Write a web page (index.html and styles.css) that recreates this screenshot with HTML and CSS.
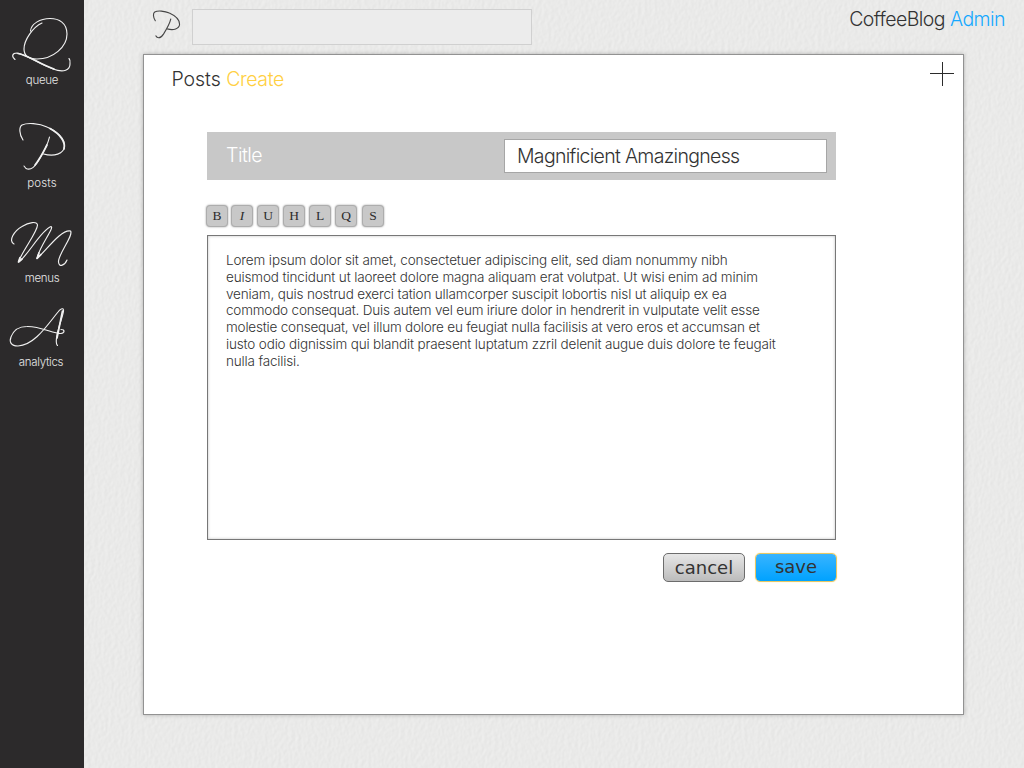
FILE: index.html
```html
<!DOCTYPE html>
<html lang="en">
<head>
<meta charset="utf-8">
<title>CoffeeBlog Admin</title>
<link rel="stylesheet" href="styles.css">
</head>
<body>
<svg class="paper" width="1024" height="768" aria-hidden="true">
  <filter id="grain" x="0" y="0" width="100%" height="100%" color-interpolation-filters="sRGB">
    <feTurbulence type="fractalNoise" baseFrequency="0.3 0.22" numOctaves="2" seed="4" result="n"/>
    <feDiffuseLighting in="n" surfaceScale="0.1" diffuseConstant="1.07" lighting-color="#f1f1f0">
      <feDistantLight azimuth="200" elevation="65"/>
    </feDiffuseLighting>
  </filter>
  <rect width="1024" height="768" filter="url(#grain)"/>
</svg>
<div class="app">
  <nav class="sidebar">
    <a class="nav-item queue">
      <svg class="script" viewBox="0 10 84 64" width="84" height="64">
        <path d="M42 23C33 27 24 40 24 49C24 57 30 59 37 59C53 59 67 47 67 34C67 23 59 18.500 50 18.500C40 18.500 31 24 30.500 31"/>
        <path d="M15 59.500C11 56 12.500 53 17 53C26 54 39 64 53 69C64 73 70 70 70 64C70.500 61 69.500 59 69 58.500"/>
        <path class="swell" d="M18 53.500C28 55 39 64 54 69"/>
      </svg>
      <span>queue</span>
    </a>
    <a class="nav-item posts">
      <svg class="script" viewBox="0 117 84 60" width="84" height="60">
        <path d="M23 140C19 134 19 127 22 125C27 122.500 39 123 47 127C58 132 64.500 139 64.500 146C64 154 54 157 43.500 154"/>
        <path d="M49.500 137C48 144 42 155 37 163C33 169 29 170 26 168.500L24 166"/>
        <path class="swell" d="M50 128.500C60 134 66 142 64 149M47 145C43 153 40 159 35 165"/>
      </svg>
      <span>posts</span>
    </a>
    <a class="nav-item menus">
      <svg class="script" viewBox="0 216 84 56" width="84" height="56">
        <path d="M14 244C8 241 14 231 22 226.500C29 222 37 221 37.500 225C37.500 232 22 251 18.500 262C27 257 41 230 51 226.500C55 227 39 247 37 258.500C46 251 61 229 70.500 231C74 235 58 254 58.500 262C59 268 65 265 67 260"/>
        <path class="swell" d="M20 257.500L18.500 262L22 259M39 253L37 258.500L41 254.500"/>
      </svg>
      <span>menus</span>
    </a>
    <a class="nav-item analytics">
      <svg class="script" viewBox="0 300 84 56" width="84" height="56">
        <path d="M57.500 345.500C55 343 57 333 58.500 329C60 322 64 313 63.500 310C63 307.500 60 309 58 312C48 324 35 345 18 346C11 346 9 342 11 337C14 329 19 326.500 27 326.500C40 326 54 334 61 333.500C65 333 65 329.500 61 329.500"/>
        <path class="swell" d="M62.500 311L57 338"/>
      </svg>
      <span>analytics</span>
    </a>
  </nav>
  <main class="main">
    <header class="topbar">
      <svg class="search-mark" viewBox="18 120 50 53" width="30" height="31">
        <path d="M23 140C19 134 19 127 22 125C27 122.500 39 123 47 127C58 132 64.500 139 64.500 146C64 154 54 157 43.500 154M49.500 137C48 144 42 155 37 163C33 169 29 170 26 168.500L24 166"/>
      </svg>
      <input class="search" type="text" aria-label="Search">
      <h1 class="brand">CoffeeBlog <b>Admin</b></h1>
    </header>
    <section class="panel">
      <div class="panel-head">
        <h2>Posts <b>Create</b></h2>
        <svg width="24" height="24" viewBox="0 0 24 24"><path d="M12.500 0V24M0 11.500H24" stroke="#2b2b2b" fill="none"/></svg>
      </div>
      <div class="form">
        <div class="title-row">
          <label>Title</label>
          <div class="title-input"><span>Magnificient Amazingness</span></div>
        </div>
        <div class="tools">
          <button>B</button><button class="italic">I</button><button>U</button><button>H</button><button>L</button><button>Q</button><button>S</button>
        </div>
        <div class="editor">
          <span class="l1">Lorem ipsum dolor sit amet, consectetuer adipiscing elit, sed diam nonummy nibh</span>
          <span class="l2">euismod tincidunt ut laoreet dolore magna aliquam erat volutpat. Ut wisi enim ad minim</span>
          <span class="l3">veniam, quis nostrud exerci tation ullamcorper suscipit lobortis nisl ut aliquip ex ea</span>
          <span class="l4">commodo consequat. Duis autem vel eum iriure dolor in hendrerit in vulputate velit esse</span>
          <span class="l5">molestie consequat, vel illum dolore eu feugiat nulla facilisis at vero eros et accumsan et</span>
          <span class="l6">iusto odio dignissim qui blandit praesent luptatum zzril delenit augue duis dolore te feugait</span>
          <span class="l7">nulla facilisi.</span>
        </div>
        <div class="actions">
          <button class="cancel">cancel</button>
          <button class="save">save</button>
        </div>
      </div>
    </section>
  </main>
</div>
</body>
</html>
```
FILE: styles.css
```css
* { box-sizing: border-box; }
body { margin: 0; background: #e9e9e8; color: #333; font-family: Inter, "Liberation Sans", sans-serif; font-weight: 300; overflow: hidden; }
.paper { position: absolute; top: 0; left: 0; z-index: -1; }
.app { display: flex; height: 768px; }
.sidebar { width: 84px; background: #2c2a2b; display: flex; flex-direction: column; padding-top: 10px; }
.nav-item { display: flex; flex-direction: column; align-items: center; color: #e6e6e6; font-size: 11.5px; line-height: 12px; letter-spacing: -0.3px; }
.posts { margin-top: 31px; letter-spacing: 0.1px; }
.menus { margin-top: 27px; }
.analytics { margin-top: 16px; }
.analytics span { margin-right: 2px; }
.script { display: block; fill: none; stroke: #f0f0f0; stroke-width: 1.15; stroke-linecap: round; stroke-linejoin: round; }
.script .swell { stroke-width: 1.7; }
.main { flex: 1; padding-left: 59px; }
.topbar { height: 54px; display: flex; align-items: flex-start; padding: 9px 19px 0 9px; }
.search-mark { fill: none; stroke: #444; stroke-width: 1.9; stroke-linecap: round; }
.search { width: 340px; height: 36px; margin-left: 10px; padding: 0 8px; border: 1px solid #d0d0d0; background: #ececec; }
.brand, .panel-head h2 { margin: 0; font-size: 19.5px; line-height: 24px; font-weight: 300; letter-spacing: -0.55px; white-space: nowrap; }
.brand b, .panel-head b { font-weight: 300; }
.brand { margin: -2px 0 0 auto; }
.brand b { color: #15a8ff; }
.panel-head b { color: #ffd042; letter-spacing: -0.4px; }
.panel { width: 821px; height: 661px; background: #fff; border: 1px solid #929292; box-shadow: 0 0 4px rgba(0,0,0,.25); }
.panel-head { display: flex; justify-content: space-between; padding: 7px 9px 0 28px; height: 77px; }
.panel-head h2 { padding-top: 5px; letter-spacing: -0.05px; margin-left: -0.5px; }
.form { width: 629px; margin-left: 63px; }
.title-row { height: 48px; background: #c8c8c8; display: flex; justify-content: space-between; align-items: flex-start; padding: 7px 9px 0 19px; }
.title-row label { color: #fff; font-size: 19.5px; line-height: 32px; letter-spacing: -0.5px; }
.title-input { width: 323px; height: 34px; padding-left: 12px; background: #fff; border: 1px solid #a6a6a6; font-size: 19.5px; line-height: 33px; letter-spacing: -0.69px; white-space: nowrap; }
.tools { display: flex; gap: 4px; margin: 25px 0 0 -1px; }
.tools button { width: 22px; height: 22px; padding: 0; background: #c8c8c8; border: 1px solid #adadad; border-radius: 4px; box-shadow: 0 0 2px rgba(0,0,0,.4); font: 13.5px/20px "Liberation Serif", serif; color: #2c2c2c; }
.tools button:first-child { margin-right: -1px; }
.tools button:last-child { margin-left: 1px; }
.tools .italic { font-style: italic; }
.editor { height: 305px; margin-top: 8px; padding: 16px 18px; border: 1px solid #777; box-shadow: inset 0 0 3px rgba(0,0,0,.25); font-size: 13.5px; line-height: 16.8px; white-space: nowrap; }
.editor span { display: block; }
.l1 { letter-spacing: -0.13px; }
.l2 { letter-spacing: -0.135px; }
.l3 { letter-spacing: -0.16px; }
.l4 { letter-spacing: -0.19px; }
.l5 { letter-spacing: -0.195px; }
.l6 { letter-spacing: -0.16px; }
.l7 { letter-spacing: -0.17px; }
.actions { display: flex; justify-content: flex-end; gap: 10px; margin: 13px -1px 0 0; }
.actions button { width: 82px; height: 29px; padding: 0; border-radius: 5px; font: 18px/26px "DejaVu Sans", sans-serif; color: #333; }
.actions .cancel { border: 1px solid #6c6c6c; background: linear-gradient(#e6e6e6, #bcbcbc); }
.actions .save { padding-bottom: 2px; border: 1px solid #e6c765; background: linear-gradient(#38b4ff, #00a2ff) padding-box; box-shadow: 0 0 1px #ffd35c; }
```
